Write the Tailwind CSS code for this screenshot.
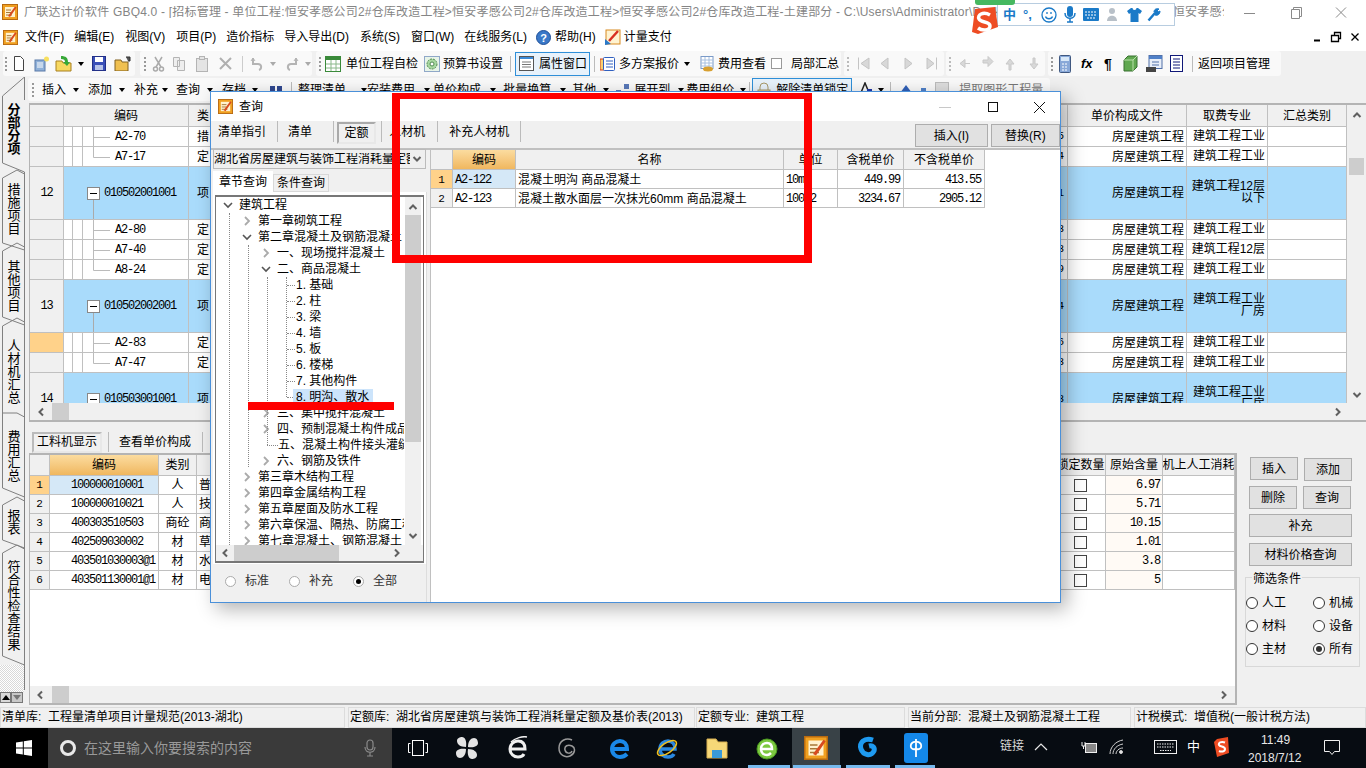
<!DOCTYPE html>
<html lang="zh-CN">
<head>
<meta charset="UTF-8">
<title>广联达计价软件 GBQ4.0</title>
<script src="https://cdn.jsdelivr.net/npm/@tailwindcss/browser@4"></script>
</head>
<body class="relative w-[1366px] h-[768px] overflow-hidden bg-[#f0f0f0] text-black text-[12px] leading-none font-['Liberation_Sans','Noto_Sans_CJK_SC',sans-serif]">

<svg class="hidden">
  <symbol id="app" viewBox="0 0 16 16"><rect x="0.5" y="0.5" width="15" height="15" fill="#f0a020" stroke="#b86a10"/><rect x="3" y="3" width="10" height="10" fill="#fff2cf"/><path d="M4 6h5M4 8.500h5M4 11h6" stroke="#a87838"/><path d="M6 12L13 2.500l1.500 1L8 13z" fill="#d84a20"/></symbol>
  <symbol id="up" viewBox="0 0 10 10"><path d="M1.500 7L5 3.500 8.500 7" fill="none" stroke="#606060" stroke-width="2"/></symbol>
  <symbol id="down" viewBox="0 0 10 10"><path d="M1.500 3L5 6.500 8.500 3" fill="none" stroke="#606060" stroke-width="2"/></symbol>
  <symbol id="left" viewBox="0 0 10 10"><path d="M7 1.500L3.500 5 7 8.500" fill="none" stroke="#606060" stroke-width="2"/></symbol>
  <symbol id="right" viewBox="0 0 10 10"><path d="M3 1.500L6.500 5 3 8.500" fill="none" stroke="#606060" stroke-width="2"/></symbol>
  <symbol id="treeopen" viewBox="0 0 10 10"><path d="M1 3L5 7 9 3" fill="none" stroke="#555" stroke-width="1.600"/></symbol>
  <symbol id="treeclosed" viewBox="0 0 10 10"><path d="M3 1L7 5 3 9" fill="none" stroke="#aaa" stroke-width="1.800"/></symbol>
  <symbol id="tplus" viewBox="0 0 27 20"><path d="M10.500 0V20M10.500 10.500H27" stroke="#bbb" fill="none"/></symbol>
  <symbol id="tlast" viewBox="0 0 27 20"><path d="M10.500 0V10.500H27" stroke="#bbb" fill="none"/></symbol>
</svg>

<!-- title bar -->
<div class="h-[23px] bg-white flex items-center relative">
  <svg class="w-[16px] h-[16px] ml-[2px]"><use href="#app"/></svg>
  <div class="ml-[6px] w-[1200px] whitespace-nowrap overflow-hidden text-[#858585] tracking-[0.2px]">广联达计价软件 GBQ4.0 - [招标管理 - 单位工程:恒安孝感公司2#仓库改造工程&gt;恒安孝感公司2#仓库改造工程&gt;恒安孝感公司2#仓库改造工程-土建部分 - C:\Users\Administrator\Desktop\恒安孝感公司2#仓库改造工\恒安孝感公...</div>
  <svg class="absolute left-[1244px] top-[6px]" width="110" height="14" fill="none" stroke="#8a8a8a"><path d="M0 7.500H11"/><path d="M47.500 3.500h8v9h-8zM49.500 3.500v-2h8v9h-2"/><path d="M92 1.500l10 10M102 1.500l-10 10"/></svg>
</div>

<!-- menu bar -->
<div class="h-[28px] bg-white flex items-center relative">
  <svg class="w-[15px] h-[15px] ml-[3px]"><use href="#app"/></svg>
  <span class="ml-[7px]">文件(F)</span>
  <span class="ml-[10px]">编辑(E)</span>
  <span class="ml-[11px]">视图(V)</span>
  <span class="ml-[11px]">项目(P)</span>
  <span class="ml-[10px]">造价指标</span>
  <span class="ml-[10px]">导入导出(D)</span>
  <span class="ml-[11px]">系统(S)</span>
  <span class="ml-[11px]">窗口(W)</span>
  <span class="ml-[10px]">在线服务(L)</span>
  <svg class="ml-[9px]" width="15" height="15"><circle cx="7.500" cy="7.500" r="7" fill="#3a78c8" stroke="#1e4f98"/><text x="7.500" y="11.500" text-anchor="middle" font-size="11" font-weight="700" fill="#fff">?</text></svg>
  <span class="ml-[4px]">帮助(H)</span>
  <svg class="ml-[8px]" width="17" height="17"><rect x="2" y="1" width="14" height="14" fill="#fff3d0" stroke="#d88a20"/><path d="M5 12L14 2" stroke="#d83020" stroke-width="2.500"/><path d="M1 10l6 5-6 1z" fill="#2a78c8"/></svg>
  <span class="ml-[3px]">计量支付</span>
  <svg class="absolute left-[1312px] top-[8px]" width="50" height="12" fill="none" stroke="#000"><path d="M2 9.500h6" stroke-width="2"/><path d="M19.500 4.500h7v6h-7zM22.500 4.500v-3h6v6h-2" stroke-width="1.300"/><path d="M39.500 2.500l7 7M46.500 2.500l-7 7" stroke-width="1.300"/></svg>
</div>

<!-- toolbar one -->
<div class="h-[25px] flex items-center pl-[3px]">
  <div class="h-[25px] w-[132px] rounded-[3px] bg-[#f9f9f9] flex items-center">
    <div class="w-[5px] h-[14px] ml-[2px] mr-[-2px] border-l-2 border-dotted border-[#999]"></div>
    <div class="w-[22px] flex justify-center"><svg width="12" height="15"><path d="M1.500.500h6l3 3v11h-9z" fill="#fff" stroke="#444"/></svg></div>
    <div class="w-[23px] flex justify-center"><svg width="17" height="16"><rect x="2" y="4" width="10" height="11" fill="#8fb0d8" stroke="#5a7aa8"/><path d="M4 7h6M4 9h6M4 11h6" stroke="#fff"/><circle cx="13.500" cy="3" r="2.500" fill="#f8e060"/></svg></div>
    <div class="w-[23px] flex justify-center"><svg width="18" height="17"><path d="M1 6h6l1 2h8v8H1z" fill="#f8d860" stroke="#a88020"/><path d="M6 1c5 0 7 2 7 6h2l-3 4-4-4h2c0-2-1-3-4-3z" fill="#38a838"/></svg></div>
    <div class="w-[12px] flex justify-center"><div class="border-x-[3px] border-t-[4px] border-x-transparent border-t-black"></div></div>
    <div class="w-[23px] flex justify-center"><svg width="14" height="15"><rect x=".5" y=".5" width="13" height="14" fill="#3a50b8" stroke="#223088"/><rect x="3" y="1" width="8" height="5" fill="#fff"/><rect x="3" y="9" width="8" height="5" fill="#b8c4e8"/></svg></div>
    <div class="w-[25px] flex justify-center"><svg width="17" height="15"><path d="M1 4h6l1 2h6v9H1z" fill="#f0c050" stroke="#806020"/><path d="M12 1h4v4h-2" fill="#555" stroke="#333"/></svg></div>
  </div>
  <div class="ml-[5px] h-[25px] w-[172px] rounded-[3px] bg-[#f9f9f9] flex items-center text-[#b8b8b8]">
    <div class="w-[5px] h-[14px] ml-[4px] border-l-2 border-dotted border-[#999]"></div>
    <div class="w-[18px] flex justify-center"><svg width="13" height="16" fill="none" stroke="#aaa" stroke-width="1.500"><path d="M3 1l6 10M10 1L4 11"/><circle cx="3.500" cy="13" r="2"/><circle cx="9.500" cy="13" r="2"/></svg></div>
    <div class="w-[23px] flex justify-center"><svg width="14" height="15" fill="#eee" stroke="#b4b4b4"><path d="M1.500 1.500h6v9h-6zM5.500 4.500h7v10h-7z"/></svg></div>
    <div class="w-[23px] flex justify-center"><svg width="14" height="16" fill="#e4e4e4" stroke="#b4b4b4"><rect x="1.500" y="2.500" width="11" height="13"/><rect x="4.500" y=".5" width="5" height="3"/></svg></div>
    <div class="w-[24px] flex justify-center"><svg width="15" height="15" stroke="#b0b0b0" stroke-width="2"><path d="M2 2l11 11M13 2L2 13"/></svg></div>
    <div class="w-[1px] h-[16px] ml-[5px] bg-[#ccc]"></div>
    <div class="w-[22px] ml-[3px] flex justify-center"><svg width="14" height="15" fill="none" stroke="#b4b4b4" stroke-width="2"><path d="M3 2v6h5c4 0 4 5 1 6"/><path d="M1 5l2-3 2 3" stroke-width="1"/></svg></div>
    <div class="w-[10px] flex justify-center"><div class="border-x-[3px] border-t-[4px] border-x-transparent border-t-[#aaa]"></div></div>
    <div class="w-[28px] flex justify-center"><svg width="14" height="15" fill="none" stroke="#b4b4b4" stroke-width="2"><path d="M11 2v6H6c-4 0-4 5-1 6"/><path d="M9 5l2-3 2 3" stroke-width="1"/></svg></div>
    <div class="w-[4px] flex justify-center"><div class="shrink-0 border-x-[3px] border-t-[4px] border-x-transparent border-t-[#aaa]"></div></div>
  </div>
  <div class="ml-[4px] h-[25px] w-[525px] rounded-[3px] bg-[#f9f9f9] flex items-center whitespace-nowrap">
    <div class="w-[5px] h-[14px] ml-[3px] border-l-2 border-dotted border-[#999]"></div>
    <svg class="ml-[1px]" width="16" height="16"><rect x=".5" y=".5" width="15" height="15" fill="#fff" stroke="#3a8a3a"/><rect x="1" y="1" width="14" height="3" fill="#3a8a3a"/><path d="M1 8h14M1 12h14M6 4v11M11 4v11" stroke="#8ab88a"/></svg>
    <span class="ml-[5px]">单位工程自检</span>
    <svg class="ml-[6px]" width="16" height="16"><rect x=".5" y=".5" width="15" height="15" fill="#e8f4e8" stroke="#90a8c8"/><circle cx="8" cy="8" r="5" fill="#a8d8a0" stroke="#508850" stroke-dasharray="2 1"/><circle cx="8" cy="8" r="2" fill="#fff" stroke="#508850"/></svg>
    <span class="ml-[3px]">预算书设置</span>
    <div class="w-[1px] h-[16px] ml-[7px] bg-[#bbb]"></div>
    <div class="ml-[4px] w-[75px] h-[24px] border border-[#2f8fd8] bg-[#e8f2fb] flex items-center">
      <svg class="ml-[3px]" width="15" height="15"><rect x=".5" y=".5" width="14" height="14" fill="#fff" stroke="#555"/><rect x="1" y="1" width="13" height="2" fill="#3a8ad8"/><path d="M3 6h9M3 8.500h9M3 11h9" stroke="#777"/></svg>
      <span class="ml-[5px]">属性窗口</span>
    </div>
    <div class="w-[1px] h-[16px] ml-[4px] bg-[#bbb]"></div>
    <svg class="ml-[5px]" width="16" height="16"><rect x="0" y="3" width="8" height="11" fill="#f8d070" stroke="#d04020"/><rect x="3.500" y="1.500" width="11" height="13" rx="1" fill="#fff" stroke="#3060c0"/><path d="M6 5h7M6 8h7M6 11h7" stroke="#3060c0"/></svg>
    <span class="ml-[3px]">多方案报价</span>
    <div class="ml-[5px] border-x-[3px] border-t-[4px] border-x-transparent border-t-black"></div>
    <svg class="ml-[10px]" width="14" height="16"><rect x="1" y=".5" width="12" height="12" fill="#fff" stroke="#7a9ac8"/><path d="M1 4h12M1 7h12M1 10h12M5 1v11M9 1v11" stroke="#a8c0e0"/><ellipse cx="8" cy="13" rx="5" ry="2.500" fill="#d8a030"/></svg>
    <span class="ml-[4px]">费用查看</span>
    <div class="ml-[5px] w-[11px] h-[11px] border border-[#999] bg-white"></div>
    <span class="ml-[9px]">局部汇总</span>
  </div>
  <div class="ml-[3px] h-[25px] w-[100px] rounded-[3px] bg-[#f9f9f9] flex items-center">
    <div class="w-[5px] h-[14px] ml-[3px] border-l-2 border-dotted border-[#bbb]"></div>
    <svg class="ml-[3px]" width="90" height="15" fill="#d8d8d8" stroke="#c4c4c4"><path d="M3.500 1.500v12M14 2l-8 5.500 8 5.500zM33 2l-7 5.500 7 5.500zM50 2l7 5.500-7 5.500zM72 2l7 5.500-7 5.500zM81.500 1.500v12"/></svg>
  </div>
  <div class="ml-[2px] h-[25px] w-[99px] rounded-[3px] bg-[#f9f9f9] flex items-center">
    <div class="w-[5px] h-[14px] ml-[3px] border-l-2 border-dotted border-[#bbb]"></div>
    <svg class="ml-[5px]" width="82" height="15" fill="#d8d8d8" stroke="#c8c8c8"><path d="M11 7.500h-5v-4l-5 4 5 4v-4M24 4h5V.5l5 5-5 5v-3.500h-5zM50 14V8h-3l4-5 4 5h-3v6zM74 2v6h-3l4 5 4-5h-3V2z"/></svg>
  </div>
  <div class="ml-[3px] h-[25px] w-[233px] rounded-[3px] bg-[#f9f9f9] flex items-center whitespace-nowrap">
    <div class="w-[5px] h-[14px] ml-[3px] border-l-2 border-dotted border-[#999]"></div>
    <svg class="ml-[3px]" width="12" height="18"><rect x=".5" y=".5" width="11" height="17" rx="1" fill="#88a8d8" stroke="#405880"/><rect x="2" y="2" width="8" height="4" fill="#d8e8f8"/><path d="M3 9h6M3 12h6M3 15h6" stroke="#fff" stroke-dasharray="2 1"/></svg>
    <span class="ml-[10px] italic font-bold text-[13px] w-[12px]">fx</span>
    <span class="ml-[11px] font-bold text-[14px] w-[9px]">¶</span>
    <svg class="ml-[10px]" width="15" height="17"><path d="M1 5l4-4h9v11l-4 4H1z" fill="#60a850" stroke="#387030"/><path d="M1 5h9v11M10 5l4-4" fill="none" stroke="#b8e0a8"/></svg>
    <svg class="ml-[8px]" width="17" height="18"><rect x="3" y=".5" width="13" height="13" fill="#e8eef8" stroke="#5070a8"/><rect x="3" y="1" width="13" height="3" fill="#5080c8"/><path d="M6 7h7M6 10h7" stroke="#5070a8"/><rect x="0" y="12" width="10" height="5" fill="#444"/></svg>
    <svg class="ml-[7px]" width="13" height="17"><rect x=".5" y=".5" width="12" height="16" fill="#fff" stroke="#101878"/><path d="M3 4h7M3 7h7M3 10h7M3 13h7" stroke="#101878"/></svg>
    <div class="w-[1px] h-[16px] ml-[9px] bg-[#bbb]"></div>
    <span class="ml-[5px]">返回项目管理</span>
  </div>
</div>

<!-- toolbar two: the dialog sits over its lower half -->
<div class="h-[23px] mt-[2px] ml-[28px] w-[1022px] rounded-[3px] bg-[#f9f9f9] flex items-center whitespace-nowrap">
  <div class="w-[5px] h-[14px] ml-[4px] border-l-2 border-dotted border-[#999]"></div>
  <span class="ml-[5px]">插入</span><div class="ml-[7px] border-x-[3px] border-t-[4px] border-x-transparent border-t-black"></div>
  <span class="ml-[9px]">添加</span><div class="ml-[7px] border-x-[3px] border-t-[4px] border-x-transparent border-t-black"></div>
  <span class="ml-[9px]">补充</span><div class="ml-[4px] border-x-[3px] border-t-[4px] border-x-transparent border-t-black"></div>
  <span class="ml-[8px]">查询</span><div class="ml-[7px] border-x-[3px] border-t-[4px] border-x-transparent border-t-black"></div>
  <span class="ml-[9px]">存档</span><div class="ml-[6px] border-x-[3px] border-t-[4px] border-x-transparent border-t-black"></div>
  <svg class="ml-[11px]" width="14" height="14" fill="#304890"><rect x="1" y="3" width="5" height="10"/><rect x="8" y="3" width="5" height="10"/></svg>
  <div class="w-[1px] h-[16px] ml-[8px] bg-[#bbb]"></div>
  <span class="ml-[6px]">整理清单</span><div class="ml-[15px] border-x-[3px] border-t-[4px] border-x-transparent border-t-black"></div>
  <span class="ml-[0px]">安装费用</span><div class="ml-[9px] border-x-[3px] border-t-[4px] border-x-transparent border-t-black"></div>
  <span class="ml-[3px]">单价构成</span><div class="ml-[9px] border-x-[3px] border-t-[4px] border-x-transparent border-t-black"></div>
  <span class="ml-[7px]">批量换算</span><div class="ml-[9px] border-x-[3px] border-t-[4px] border-x-transparent border-t-black"></div>
  <span class="ml-[6px]">其他</span><div class="ml-[7px] border-x-[3px] border-t-[4px] border-x-transparent border-t-black"></div>
  <svg class="ml-[6px]" width="16" height="14" fill="#5878b8"><rect x="1" y="7" width="5" height="5"/><rect x="9" y="1" width="5" height="5"/></svg>
  <span class="ml-[3px]">展开到</span><div class="ml-[8px] border-x-[3px] border-t-[4px] border-x-transparent border-t-black"></div>
  <span class="ml-[2px]">费用组价</span><div class="ml-[6px] border-x-[3px] border-t-[4px] border-x-transparent border-t-black"></div>
  <div class="w-[1px] h-[16px] ml-[3px] bg-[#bbb]"></div>
  <div class="ml-[2px] w-[100px] h-[23px] border border-[#2f8fd8] bg-[#e8f2fb] flex items-center">
    <svg class="ml-[3px]" width="16" height="15" fill="none" stroke="#a89868"><path d="M4 8V5a4 4 0 0 1 8 0v3"/><rect x="2" y="8" width="12" height="6" fill="#e8d8a8"/></svg>
    <span class="ml-[4px]">解除清单锁定</span>
  </div>
  <svg class="ml-[6px]" width="16" height="15"><path d="M2 13L7 1l5 12" fill="none" stroke="#222" stroke-width="1.500"/><rect x="9" y="7" width="5" height="7" fill="#2038a8"/></svg>
  <div class="ml-[4px] border-x-[3px] border-t-[4px] border-x-transparent border-t-black"></div>
  <div class="w-[1px] h-[16px] ml-[6px] bg-[#bbb]"></div>
  <svg class="ml-[7px]" width="16" height="14" fill="#3060b8"><path d="M8 2l6 8H2z"/></svg>
  <svg class="ml-[6px]" width="8" height="14" fill="#5080c8"><rect x="1" y="5" width="5" height="8"/></svg>
  <svg class="ml-[7px]" width="14" height="15"><rect x=".5" y=".5" width="13" height="14" fill="#ddd" stroke="#bbb"/></svg>
  <span class="ml-[10px] text-[#777]">提取图形工程量</span>
</div>

<!-- main area -->
<div class="flex h-[604px] mt-[2px]">

  <!-- side tabs -->
  <div class="w-[29px] shrink-0 relative">
    <svg class="absolute left-0 top-[-26px]" width="29" height="630" viewBox="0 77 29 630" fill="none" stroke="#808080">
      <path d="M24.500 77v23M24.500 77L2.500 96V163L24.500 172"/>
      <path d="M24.500 172V690"/>
      <path d="M2.500 178L17 170l7.500 4M2.500 178V243L24.500 250"/>
      <path d="M2.500 251L17 243l7.500 4M2.500 251V317L24.500 325"/>
      <path d="M2.500 326L17 318l7.500 4M2.500 326V413"/>
      <path d="M2.500 413L17 413l7.500 4M2.500 413V488L24.500 497"/>
      <path d="M2.500 505L17 497l7.500 4M2.500 505V540L24.500 548"/>
      <path d="M2.500 553L17 545l7.500 4M2.500 553V656L24.500 665"/>
    </svg>
    <div class="absolute left-0 top-[562px] w-[24px] h-[27px] bg-[repeating-conic-gradient(#d8d8d8_0_25%,#ffffff_0_50%)] bg-[length:2px_2px]"></div>
    <div class="absolute left-0 top-[589px] w-[23px] h-[11px] flex">
      <div class="w-[11px] h-[11px] bg-[#d8d8d8] border border-[#777] flex items-center justify-center"><div class="border-x-[4px] border-b-[5px] border-x-transparent border-b-black"></div></div>
      <div class="w-[12px] h-[11px] bg-[#c8c8c8] border border-[#777] flex items-center justify-center"><div class="border-x-[4px] border-t-[5px] border-x-transparent border-t-[#777]"></div></div>
    </div>
    <div class="relative flex flex-col w-[28px] text-center text-[13px] leading-[13px]">
      <div class="font-bold">分<br>部<br>分<br>项</div>
      <div class="mt-[28px]">措<br>施<br>项<br>目</div>
      <div class="mt-[25px]">其<br>他<br>项<br>目</div>
      <div class="mt-[27px]">人<br>材<br>机<br>汇<br>总</div>
      <div class="mt-[26px]">费<br>用<br>汇<br>总</div>
      <div class="mt-[27px]">报<br>表</div>
      <div class="mt-[25px]">符<br>合<br>性<br>检<br>查<br>结<br>果</div>
    </div>
  </div>

  <div class="flex-1 min-w-0 flex flex-col">
    <!-- sub-item grid -->
    <div class="h-[319px] shrink-0 border-t-2 border-b-2 border-l border-[#b4b4b4] bg-white flex flex-col overflow-hidden">
      <div class="flex-1 min-h-0 flex">
        <div class="w-[1318px] overflow-hidden [&>div]:grid [&>div]:grid-cols-[34px_125px_851px_28px_119px_81px_79px] [&>div>div]:border-r [&>div>div]:border-b [&>div>div]:border-[#c0c0c0] [&>div>div]:overflow-hidden">
          <div class="h-[22px] bg-[#f0f0f0] [&>div]:flex [&>div]:items-center [&>div]:justify-center">
            <div></div><div>编码</div><div class="!justify-start pl-[8px]">类</div><div></div><div>单价构成文件</div><div>取费专业</div><div>汇总类别</div>
          </div>
          <!-- rows -->
          <div class="h-[20px]">
            <div class="bg-[#f0f0f0]"></div>
            <div class="flex items-center"><div class="w-[9px] h-full border-r border-[#c0c0c0]"></div><div class="w-[10px] h-full border-r border-[#c0c0c0]"></div><svg width="27" height="20"><use href="#tplus"/></svg><span class="ml-[5px] font-['Liberation_Mono'] text-[12px] tracking-[-1.2px]">A2-70</span></div>
            <div class="flex items-center pl-[8px]">措</div>
            <div class="flex items-center justify-end pr-[3px] font-['Liberation_Mono'] text-[11px]">5</div>
            <div class="flex items-center justify-end pr-[2px]">房屋建筑工程</div>
            <div class="flex items-center justify-end pr-[2px] pb-[2px]">建筑工程工业</div>
            <div></div>
          </div>
          <div class="h-[20px]">
            <div class="bg-[#f0f0f0]"></div>
            <div class="flex items-center"><div class="w-[9px] h-full border-r border-[#c0c0c0]"></div><div class="w-[10px] h-full border-r border-[#c0c0c0]"></div><svg width="27" height="20"><use href="#tlast"/></svg><span class="ml-[5px] font-['Liberation_Mono'] text-[12px] tracking-[-1.2px]">A7-17</span></div>
            <div class="flex items-center pl-[8px]">定</div>
            <div class="flex items-center justify-end pr-[3px] font-['Liberation_Mono'] text-[11px]">4</div>
            <div class="flex items-center justify-end pr-[2px]">房屋建筑工程</div>
            <div class="flex items-center justify-end pr-[2px] pb-[2px]">建筑工程工业</div>
            <div></div>
          </div>
          <div class="h-[53px] bg-[#a9dbfb]">
            <div class="!bg-[#f0f0f0] flex items-center justify-center font-['Liberation_Mono'] text-[12px] tracking-[-1.2px]">12</div>
            <div class="relative flex items-center pl-[23px]"><div class="w-[13px] h-[13px] bg-white border border-[#888] flex items-center justify-center"><div class="w-[7px] h-[1px] bg-black"></div></div><span class="ml-[4px] font-['Liberation_Mono'] text-[12px] tracking-[-1.2px]">010502001001</span><div class="absolute left-[29px] top-[33px] bottom-0 w-[1px] bg-[#aaa]"></div></div>
            <div class="flex items-center pl-[8px]">项</div>
            <div class="flex items-center justify-end pr-[3px] font-['Liberation_Mono'] text-[11px]">1</div>
            <div class="flex items-center justify-end pr-[2px]">房屋建筑工程</div>
            <div class="flex flex-col justify-center items-end pr-[2px] pb-[2px] leading-[12px]"><span>建筑工程12层</span><span>以下</span></div>
            <div></div>
          </div>
          <div class="h-[20px]">
            <div class="bg-[#f0f0f0]"></div>
            <div class="flex items-center"><div class="w-[9px] h-full border-r border-[#c0c0c0]"></div><div class="w-[10px] h-full border-r border-[#c0c0c0]"></div><svg width="27" height="20"><use href="#tplus"/></svg><span class="ml-[5px] font-['Liberation_Mono'] text-[12px] tracking-[-1.2px]">A2-80</span></div>
            <div class="flex items-center pl-[8px]">定</div>
            <div class="flex items-center justify-end pr-[3px] font-['Liberation_Mono'] text-[11px]">3</div>
            <div class="flex items-center justify-end pr-[2px]">房屋建筑工程</div>
            <div class="flex items-center justify-end pr-[2px] pb-[2px]">建筑工程工业</div>
            <div></div>
          </div>
          <div class="h-[20px]">
            <div class="bg-[#f0f0f0]"></div>
            <div class="flex items-center"><div class="w-[9px] h-full border-r border-[#c0c0c0]"></div><div class="w-[10px] h-full border-r border-[#c0c0c0]"></div><svg width="27" height="20"><use href="#tplus"/></svg><span class="ml-[5px] font-['Liberation_Mono'] text-[12px] tracking-[-1.2px]">A7-40</span></div>
            <div class="flex items-center pl-[8px]">定</div>
            <div class="flex items-center justify-end pr-[3px] font-['Liberation_Mono'] text-[11px]">3</div>
            <div class="flex items-center justify-end pr-[2px]">房屋建筑工程</div>
            <div class="flex items-center justify-end pr-[2px] pb-[2px]">建筑工程12层</div>
            <div></div>
          </div>
          <div class="h-[20px]">
            <div class="bg-[#f0f0f0]"></div>
            <div class="flex items-center"><div class="w-[9px] h-full border-r border-[#c0c0c0]"></div><div class="w-[10px] h-full border-r border-[#c0c0c0]"></div><svg width="27" height="20"><use href="#tlast"/></svg><span class="ml-[5px] font-['Liberation_Mono'] text-[12px] tracking-[-1.2px]">A8-24</span></div>
            <div class="flex items-center pl-[8px]">定</div>
            <div class="flex items-center justify-end pr-[3px] font-['Liberation_Mono'] text-[11px]">9</div>
            <div class="flex items-center justify-end pr-[2px]">房屋建筑工程</div>
            <div class="flex items-center justify-end pr-[2px] pb-[2px]">建筑工程工业</div>
            <div></div>
          </div>
          <div class="h-[53px] bg-[#a9dbfb]">
            <div class="!bg-[#f0f0f0] flex items-center justify-center font-['Liberation_Mono'] text-[12px] tracking-[-1.2px]">13</div>
            <div class="relative flex items-center pl-[23px]"><div class="w-[13px] h-[13px] bg-white border border-[#888] flex items-center justify-center"><div class="w-[7px] h-[1px] bg-black"></div></div><span class="ml-[4px] font-['Liberation_Mono'] text-[12px] tracking-[-1.2px]">010502002001</span><div class="absolute left-[29px] top-[33px] bottom-0 w-[1px] bg-[#aaa]"></div></div>
            <div class="flex items-center pl-[8px]">项</div>
            <div class="flex items-center justify-end pr-[3px] font-['Liberation_Mono'] text-[11px]">4</div>
            <div class="flex items-center justify-end pr-[2px]">房屋建筑工程</div>
            <div class="flex flex-col justify-center items-end pr-[2px] pb-[2px] leading-[12px]"><span>建筑工程工业</span><span>厂房</span></div>
            <div></div>
          </div>
          <div class="h-[20px]">
            <div class="bg-[#ffd28a]"></div>
            <div class="flex items-center"><div class="w-[9px] h-full border-r border-[#c0c0c0]"></div><div class="w-[10px] h-full border-r border-[#c0c0c0]"></div><svg width="27" height="20"><use href="#tplus"/></svg><span class="ml-[5px] font-['Liberation_Mono'] text-[12px] tracking-[-1.2px]">A2-83</span></div>
            <div class="flex items-center pl-[8px]">定</div>
            <div class="flex items-center justify-end pr-[3px] font-['Liberation_Mono'] text-[11px]">6</div>
            <div class="flex items-center justify-end pr-[2px]">房屋建筑工程</div>
            <div class="flex items-center justify-end pr-[2px] pb-[2px]">建筑工程工业</div>
            <div></div>
          </div>
          <div class="h-[20px]">
            <div class="bg-[#f0f0f0]"></div>
            <div class="flex items-center"><div class="w-[9px] h-full border-r border-[#c0c0c0]"></div><div class="w-[10px] h-full border-r border-[#c0c0c0]"></div><svg width="27" height="20"><use href="#tlast"/></svg><span class="ml-[5px] font-['Liberation_Mono'] text-[12px] tracking-[-1.2px]">A7-47</span></div>
            <div class="flex items-center pl-[8px]">定</div>
            <div class="flex items-center justify-end pr-[3px] font-['Liberation_Mono'] text-[11px]">3</div>
            <div class="flex items-center justify-end pr-[2px]">房屋建筑工程</div>
            <div class="flex items-center justify-end pr-[2px] pb-[2px]">建筑工程工业</div>
            <div></div>
          </div>
          <div class="h-[53px] bg-[#a9dbfb]">
            <div class="!bg-[#f0f0f0] flex items-center justify-center font-['Liberation_Mono'] text-[12px] tracking-[-1.2px]">14</div>
            <div class="relative flex items-center pl-[23px]"><div class="w-[13px] h-[13px] bg-white border border-[#888] flex items-center justify-center"><div class="w-[7px] h-[1px] bg-black"></div></div><span class="ml-[4px] font-['Liberation_Mono'] text-[12px] tracking-[-1.2px]">010503001001</span></div>
            <div class="flex items-center pl-[8px]">项</div>
            <div class="flex items-center justify-end pr-[3px] font-['Liberation_Mono'] text-[11px]">3</div>
            <div class="flex items-center justify-end pr-[2px]">房屋建筑工程</div>
            <div class="flex flex-col justify-center items-end pr-[2px] pb-[2px] leading-[12px]"><span>建筑工程工业</span><span>厂房</span></div>
            <div></div>
          </div>
        </div>
        <!-- vertical scrollbar -->
        <div class="w-[19px] bg-[#f0f0f0] flex flex-col items-center">
          <svg class="mt-[5px]" width="10" height="10"><use href="#up"/></svg>
          <div class="mt-[38px] w-[15px] h-[17px] bg-[#cdcdcd]"></div>
          <div class="flex-1"></div>
          <svg class="mb-[3px]" width="10" height="10"><use href="#down"/></svg>
        </div>
      </div>
      <!-- horizontal scrollbar -->
      <div class="h-[17px] shrink-0 bg-[#f0f0f0] flex items-center">
        <svg class="ml-[6px]" width="10" height="10"><use href="#left"/></svg>
        <div class="ml-[6px] w-[17px] h-[17px] bg-[#cdcdcd]"></div>
        <div class="flex-1"></div>
        <svg class="mr-[23px]" width="10" height="10"><use href="#right"/></svg>
      </div>
    </div>

    <!-- lower panel -->
    <div class="flex-1 min-h-0 flex">
      <div class="w-[1208px] flex flex-col">
        <div class="h-[31px] shrink-0 flex items-center pl-[3px] pt-[9px]">
          <div class="w-[70px] h-[21px] border-2 border-[#bbb] border-r-[#e8e8e8] border-b-[#e8e8e8] flex items-center justify-center">工料机显示</div>
          <div class="ml-[6px] w-[1px] h-[20px] bg-[#bbb]"></div>
          <span class="ml-[10px]">查看单价构成</span>
          <div class="ml-[11px] w-[1px] h-[20px] bg-[#bbb]"></div>
        </div>
        <div class="h-[252px] shrink-0 border-t-2 border-b-2 border-l border-r-2 border-[#b4b4b4] bg-white flex flex-col overflow-hidden">
          <div class="flex-1 min-h-0 [&>div]:grid [&>div]:grid-cols-[20px_109px_38px_859px_50px_57px_72px] [&>div]:h-[19px] [&>div>div]:border-r [&>div>div]:border-b [&>div>div]:border-[#c0c0c0] [&>div>div]:flex [&>div>div]:items-center [&>div>div]:overflow-hidden [&>div>div]:whitespace-nowrap">
            <div class="!h-[21px] bg-[#f0f0f0] [&>div]:justify-center">
              <div></div><div class="bg-gradient-to-b from-[#fbdc9f] to-[#f0b75e]">编码</div><div>类别</div><div></div><div>锁定数量</div><div>原始含量</div><div>机上人工消耗</div>
            </div>
            <div>
              <div class="bg-[#ffd28a] justify-center font-['Liberation_Mono'] text-[11px]">1</div>
              <div class="bg-[#d5e8f7] pl-[21px] font-['Liberation_Mono'] text-[12px] tracking-[-1.2px]">100000010001</div>
              <div class="justify-center">人</div><div class="pl-[2px]">普工</div>
              <div class="justify-center"><div class="w-[13px] h-[13px] border border-[#444]"></div></div>
              <div class="bg-[#fffaf5] justify-end pr-[2px] font-['Liberation_Mono'] text-[12px] tracking-[-1.2px]">6.97</div><div></div>
            </div>
            <div>
              <div class="bg-[#f0f0f0] justify-center font-['Liberation_Mono'] text-[11px]">2</div>
              <div class="pl-[21px] font-['Liberation_Mono'] text-[12px] tracking-[-1.2px]">100000010021</div>
              <div class="justify-center">人</div><div class="pl-[2px]">技工</div>
              <div class="justify-center"><div class="w-[13px] h-[13px] border border-[#444]"></div></div>
              <div class="bg-[#fffaf5] justify-end pr-[2px] font-['Liberation_Mono'] text-[12px] tracking-[-1.2px]">5.71</div><div></div>
            </div>
            <div>
              <div class="bg-[#f0f0f0] justify-center font-['Liberation_Mono'] text-[11px]">3</div>
              <div class="pl-[21px] font-['Liberation_Mono'] text-[12px] tracking-[-1.2px]">400303510503</div>
              <div class="justify-center">商砼</div><div class="pl-[2px]">商品混凝土</div>
              <div class="justify-center"><div class="w-[13px] h-[13px] border border-[#444]"></div></div>
              <div class="bg-[#fffaf5] justify-end pr-[2px] font-['Liberation_Mono'] text-[12px] tracking-[-1.2px]">10.15</div><div></div>
            </div>
            <div>
              <div class="bg-[#f0f0f0] justify-center font-['Liberation_Mono'] text-[11px]">4</div>
              <div class="pl-[21px] font-['Liberation_Mono'] text-[12px] tracking-[-1.2px]">402509030002</div>
              <div class="justify-center">材</div><div class="pl-[2px]">草袋</div>
              <div class="justify-center"><div class="w-[13px] h-[13px] border border-[#444]"></div></div>
              <div class="bg-[#fffaf5] justify-end pr-[2px] font-['Liberation_Mono'] text-[12px] tracking-[-1.2px]">1.01</div><div></div>
            </div>
            <div>
              <div class="bg-[#f0f0f0] justify-center font-['Liberation_Mono'] text-[11px]">5</div>
              <div class="pl-[21px] font-['Liberation_Mono'] text-[12px] tracking-[-1.2px]">403501030003@1</div>
              <div class="justify-center">材</div><div class="pl-[2px]">水</div>
              <div class="justify-center"><div class="w-[13px] h-[13px] border border-[#444]"></div></div>
              <div class="bg-[#fffaf5] justify-end pr-[2px] font-['Liberation_Mono'] text-[12px] tracking-[-1.2px]">3.8</div><div></div>
            </div>
            <div>
              <div class="bg-[#f0f0f0] justify-center font-['Liberation_Mono'] text-[11px]">6</div>
              <div class="pl-[21px] font-['Liberation_Mono'] text-[12px] tracking-[-1.2px]">403501130001@1</div>
              <div class="justify-center">材</div><div class="pl-[2px]">电</div>
              <div class="justify-center"><div class="w-[13px] h-[13px] border border-[#444]"></div></div>
              <div class="bg-[#fffaf5] justify-end pr-[2px] font-['Liberation_Mono'] text-[12px] tracking-[-1.2px]">5</div><div></div>
            </div>
          </div>
          <div class="h-[17px] shrink-0 bg-[#f0f0f0] flex items-center">
            <svg class="ml-[5px]" width="10" height="10"><use href="#left"/></svg>
            <div class="ml-[7px] w-[17px] h-[17px] bg-[#cdcdcd]"></div>
            <div class="flex-1"></div>
            <svg class="mr-[6px]" width="10" height="10"><use href="#right"/></svg>
          </div>
        </div>
      </div>

      <!-- material buttons and filter -->
      <div class="flex-1 flex flex-col pt-[35px] pl-[12px]">
        <div class="flex gap-[6px]">
          <button class="w-[48px] h-[23px] ml-[1px] bg-[#e1e1e1] border border-[#adadad]">插入</button>
          <button class="w-[48px] h-[23px] mt-[1px] bg-[#e1e1e1] border border-[#adadad]">添加</button>
        </div>
        <div class="flex gap-[6px] mt-[5px]">
          <button class="w-[48px] h-[23px] bg-[#e1e1e1] border border-[#adadad]">删除</button>
          <button class="w-[48px] h-[23px] bg-[#e1e1e1] border border-[#adadad]">查询</button>
        </div>
        <button class="mt-[5px] w-[103px] h-[23px] bg-[#e1e1e1] border border-[#adadad]">补充</button>
        <button class="mt-[6px] w-[103px] h-[23px] bg-[#e1e1e1] border border-[#adadad]">材料价格查询</button>
        <div class="relative ml-[-4px] mt-[11px] w-[115px] h-[90px] border border-[#d8d8d8] pt-[19px]">
          <span class="absolute left-[6px] top-[-5px] px-[1px] bg-[#f0f0f0]">筛选条件</span>
          <div class="grid grid-cols-[67px_48px] gap-y-[11px]">
            <div class="flex items-center h-[12px]"><div class="w-[12px] h-[12px] rounded-full border border-[#333] bg-white"></div><span class="ml-[4px]">人工</span></div>
            <div class="flex items-center h-[12px]"><div class="w-[12px] h-[12px] rounded-full border border-[#333] bg-white"></div><span class="ml-[4px]">机械</span></div>
            <div class="flex items-center h-[12px]"><div class="w-[12px] h-[12px] rounded-full border border-[#333] bg-white"></div><span class="ml-[4px]">材料</span></div>
            <div class="flex items-center h-[12px]"><div class="w-[12px] h-[12px] rounded-full border border-[#333] bg-white"></div><span class="ml-[4px]">设备</span></div>
            <div class="flex items-center h-[12px]"><div class="w-[12px] h-[12px] rounded-full border border-[#333] bg-white"></div><span class="ml-[4px]">主材</span></div>
            <div class="flex items-center h-[12px]"><div class="w-[12px] h-[12px] rounded-full border border-[#333] bg-white flex items-center justify-center"><div class="w-[6px] h-[6px] rounded-full bg-[#333]"></div></div><span class="ml-[4px]">所有</span></div>
          </div>
        </div>
      </div>
    </div>
  </div>
</div>

<!-- status bar -->
<div class="h-[21px] flex whitespace-nowrap gap-[3px] [&>div]:flex [&>div]:items-center [&>div]:pl-[1px] [&>div]:pb-[1px] [&>div]:border [&>div]:border-[#dcdcdc] [&>div]:overflow-hidden">
  <div class="w-[345px]">清单库:&nbsp; 工程量清单项目计量规范(2013-湖北)</div>
  <div class="w-[347px]">定额库:&nbsp; 湖北省房屋建筑与装饰工程消耗量定额及基价表(2013)</div>
  <div class="w-[209px] ml-[-2px]">定额专业:&nbsp; 建筑工程</div>
  <div class="w-[223px]">当前分部:&nbsp; 混凝土及钢筋混凝土工程</div>
  <div class="flex-1">计税模式:&nbsp; 增值税(一般计税方法)</div>
</div>

<!-- taskbar -->
<div class="h-[40px] bg-[#070c12] flex items-center text-white relative">
  <div class="w-[48px] h-full bg-black flex items-center justify-center">
    <svg width="16" height="16" fill="#fff"><path d="M0 2.500l6.800-1v6H0zM7.800 1.300L16 0v7.500H7.800zM0 8.500h6.800v6l-6.800-1zM7.800 8.500H16V16l-8.200-1.300z"/></svg>
  </div>
  <div class="w-[344px] h-full bg-[#3a3a3a] flex items-center">
    <div class="ml-[12px] w-[16px] h-[16px] rounded-full border-[3px] border-[#e8e8e8]"></div>
    <span class="ml-[8px] text-[#999] text-[14px]">在这里输入你要搜索的内容</span>
    <svg class="ml-[112px]" width="12" height="18" fill="none" stroke="#8a8a8a" stroke-width="1.200"><rect x="3" y="1" width="6" height="10" rx="3"/><path d="M1 8c0 7 10 7 10 0M6 13v4M3 17h6"/></svg>
  </div>
  <svg class="ml-[16px]" width="20" height="16" fill="none" stroke="#fff"><rect x="4.500" y=".5" width="11" height="15"/><path d="M2.500 3.500h-2v9h2M17.500 3.500h2v9h-2"/></svg>
  <svg class="ml-[27px]" width="24" height="24" fill="#e4e4e4"><path d="M11 11C5 11 2 8 2 5c0-3 3-4 5-4 3 0 5 4 4 10zM13 11c0-6 3-9 6-9 3 0 4 3 4 5 0 3-4 5-10 4zM13 13c6 0 9 3 9 6 0 3-3 4-5 4-3 0-5-4-4-10zM11 13c0 6-3 9-6 9-3 0-4-3-4-5 0-3 4-5 10-4z"/></svg>
  <svg class="ml-[28px]" width="22" height="24" fill="none" stroke="#f0f0f0" stroke-width="3"><path d="M3 13h15c0-6-3-8-7-8s-8 3-8 8 4 8 8 8c3 0 5-1 6-3"/><path d="M4 6C8 2 16 0 20 1" stroke-width="1.500"/></svg>
  <svg class="ml-[28px]" width="20" height="22" fill="none" stroke="#9a9a9a" stroke-width="1.500"><path d="M15 3C9 0 2 4 2 11s6 10 11 8 6-8 2-10-8 0-7 4 6 4 7 1"/></svg>
  <svg class="ml-[32px]" width="22" height="24" fill="none" stroke="#1a88e8" stroke-width="4"><path d="M3 13h15c0-5-3-8-7-8s-8 3-8 8 4 8 8 8c3 0 5-1 7-3"/></svg>
  <svg class="ml-[24px]" width="24" height="24" fill="none"><path d="M5 13h15c0-5-3-8-7-8s-8 3-8 8 4 8 8 8c3 0 5-1 6-3" stroke="#2a88e0" stroke-width="3.500"/><ellipse cx="12" cy="12" rx="11" ry="5" stroke="#f0c020" stroke-width="1.500" transform="rotate(-35 12 12)"/></svg>
  <svg class="ml-[26px]" width="24" height="22"><path d="M2 2h9l2 3h9v16H2z" fill="#f6d878" stroke="#d8b050"/><rect x="7" y="13" width="10" height="8" fill="#3a9ad8"/></svg>
  <svg class="ml-[26px]" width="24" height="26" fill="none"><circle cx="12" cy="14" r="10" fill="#7cc840" stroke="#4a9a20"/><path d="M6 14h11c0-4-2-6-5-6s-6 2-6 6 3 6 6 6c2 0 3-1 4-2" stroke="#fff" stroke-width="2.500"/></svg>
  <div class="ml-[13px] w-[48px] h-full bg-[#394247] flex items-center justify-center">
    <svg width="24" height="24"><use href="#app"/></svg>
  </div>
  <svg class="ml-[14px]" width="24" height="26" fill="none" stroke="#1e9af0" stroke-width="5"><path d="M19 5c-9-3-14 3-12 9 2 6 10 8 13 2 1-3-1-6-5-5"/></svg>
  <div class="ml-[26px] w-[24px] h-[30px] rounded-[3px] bg-[#1488e8] flex items-center justify-center">
    <svg width="20" height="22" fill="none" stroke="#fff" stroke-width="1.800"><path d="M10 2v18M10 5c-7-1-7 9 0 7 7 2 7-8 0-7"/></svg>
  </div>
  <span class="absolute left-[1000px] top-[12px] text-[#d8d8d8]">链接</span>
  <svg class="absolute left-[1034px] top-[14px]" width="14" height="9" fill="none" stroke="#e8e8e8" stroke-width="1.200"><path d="M1 8l6-6 6 6"/></svg>
  <svg class="absolute left-[1081px] top-[12px]" width="18" height="14" fill="none" stroke="#f0f0f0"><rect x="4.500" y="3.500" width="11" height="9" fill="#888"/><path d="M1 2v4h3V2M2.500 6v3"/></svg>
  <svg class="absolute left-[1109px] top-[11px]" width="15" height="16" fill="none" stroke="#d0d0d0"><path d="M1 15C1 8 7 2 14 1M4 15c0-5 4-9 10-10M7 15c0-3 3-6 7-6"/><circle cx="12" cy="13" r="1.500" fill="#e8e8e8"/></svg>
  <svg class="absolute left-[1154px] top-[12px]" width="23" height="15" fill="none" stroke="#f0f0f0"><rect x=".5" y=".5" width="22" height="13"/><path d="M3 4h17M3 7h17M6 10.500h11" stroke-dasharray="1.500 1"/></svg>
  <span class="absolute left-[1187px] top-[12px] text-[13px]">中</span>
  <svg class="absolute left-[1214px] top-[9px]" width="15" height="20"><path d="M3 2l11-2 1 16-12 4-3-15z" fill="#ee4c23"/><path d="M11 5.500C7 4 4 6 5 8s6 1 6 4-4 3-6 2" fill="none" stroke="#fff" stroke-width="2"/></svg>
  <span class="absolute left-[1261px] top-[6px] text-[#e8e8e8]">11:49</span>
  <span class="absolute left-[1248px] top-[24px] text-[#e8e8e8]">2018/7/12</span>
  <svg class="absolute left-[1324px] top-[12px]" width="16" height="17" fill="none" stroke="#f0f0f0"><path d="M.5.500h15v11h-5l-2.500 3-2.500-3H.5z"/></svg>
  <div class="absolute left-[748px] bottom-0 w-[42px] h-[3px] bg-[#76b9ed]"></div>
  <div class="absolute left-[793px] bottom-0 w-[48px] h-[3px] bg-[#76b9ed]"></div>
  <div class="absolute left-[846px] bottom-0 w-[44px] h-[3px] bg-[#76b9ed]"></div>
  <div class="absolute left-[895px] bottom-0 w-[40px] h-[3px] bg-[#76b9ed]"></div>
</div>

<!-- sogou ime bar, floats over the title bar -->
<div class="absolute left-[997px] top-[3px] w-[178px] h-[23px] bg-white border border-[#b8cde0] flex items-center">
  <span class="ml-[5px] font-bold text-[13px] text-[#1a7ac8]">中</span>
  <span class="ml-[7px] font-bold text-[13px] text-[#1a7ac8]">°,</span>
  <svg class="ml-[9px]" width="16" height="16" fill="none" stroke="#1a7ac8" stroke-width="1.300"><circle cx="8" cy="8" r="7"/><path d="M4.500 9.500c1 3 6 3 7 0M6 5v2M10 5v2"/></svg>
  <svg class="ml-[7px]" width="12" height="17" fill="#1a7ac8"><rect x="3" y="0" width="6" height="11" rx="3"/><path d="M1 7c0 7 10 7 10 0M6 13v3M3 16h6" fill="none" stroke="#1a7ac8" stroke-width="1.500"/></svg>
  <svg class="ml-[7px]" width="16" height="13"><rect width="16" height="13" rx="1" fill="#1a7ac8"/><path d="M2 4h12M2 7h12M4 10h8" stroke="#fff" stroke-dasharray="2 1"/></svg>
  <svg class="ml-[7px]" width="15" height="16" fill="#b8c0c8"><circle cx="6" cy="4" r="3"/><path d="M1 14c0-7 10-7 10 0z"/></svg>
  <svg class="ml-[6px]" width="15" height="14" fill="#1a7ac8"><path d="M4 0L0 3l2 3 1.500-1v9h8V5L13 6l2-3-4-3H9.500a2 2 0 0 1-4 0z"/></svg>
  <svg class="ml-[5px]" width="14" height="15" fill="none" stroke="#1a7ac8" stroke-width="2.500"><path d="M1.500 13.500L8 6"/><path d="M7 5c0-3 3-4 5-3l-2 2 1 1 2-1c0 3-2 5-5 4" fill="#1a7ac8" stroke-width="1"/></svg>
</div>
<div class="absolute left-[975px] top-0 w-[40px] h-[5px] bg-[#46b860] rounded-b-[3px]"></div>
<svg class="absolute left-[970px] top-[7px]" width="28" height="28"><path d="M5 2l20-2 3 20-20 7-6-2z" fill="#ee4c23"/><path d="M20 8C13 4 7 8 9 12s11 2 11 7-8 5-12 2" fill="none" stroke="#fff" stroke-width="3.500"/></svg>

<!-- query dialog -->
<div class="absolute left-[210px] top-[91px] w-[851px] h-[512px] bg-white border border-[#4a90d9] shadow-[6px_6px_18px_rgba(0,0,0,0.3)] flex flex-col">
  <div class="h-[29px] shrink-0 flex items-center relative">
    <svg class="w-[15px] h-[15px] ml-[7px]"><use href="#app"/></svg>
    <span class="ml-[6px]">查询</span>
    <svg class="absolute left-[728px] top-[8px]" width="110" height="14" fill="none" stroke="#111"><path d="M0 7.500H12" stroke="#c8c8c8"/><rect x="49.500" y="2.500" width="9" height="9"/><path d="M95 2l11 11M106 2L95 13"/></svg>
  </div>
  <div class="h-[27px] shrink-0 bg-[#f0f0f0] flex items-start relative whitespace-nowrap">
    <span class="ml-[7px] mt-[5px]">清单指引</span>
    <div class="ml-[11px] w-[1px] h-[21px] bg-[#bbb]"></div>
    <span class="ml-[10px] mt-[5px]">清单</span>
    <div class="ml-[21px] w-[1px] h-[21px] bg-[#bbb]"></div>
    <div class="ml-[3px] mt-[1px] w-[40px] h-[22px] border-2 border-[#aaa] border-r-[#e8e8e8] border-b-[#e8e8e8] flex items-center justify-center">定额</div>
    <div class="ml-[5px] w-[1px] h-[21px] bg-[#bbb]"></div>
    <span class="ml-[7px] mt-[5px]">人材机</span>
    <div class="ml-[12px] w-[1px] h-[21px] bg-[#bbb]"></div>
    <span class="ml-[11px] mt-[5px]">补充人材机</span>
    <div class="ml-[11px] w-[1px] h-[21px] bg-[#bbb]"></div>
    <button class="ml-[394px] mt-[3px] w-[74px] h-[23px] bg-[#e1e1e1] border border-[#adadad]">插入(I)</button>
    <button class="ml-[3px] mt-[3px] w-[71px] h-[23px] bg-[#e1e1e1] border border-[#adadad]">替换(R)</button>
  </div>
  <div class="flex-1 min-h-0 flex border-t-2 border-[#c0c0c0]">
    <!-- left: chapter tree -->
    <div class="w-[219px] shrink-0 bg-[#f0f0f0] flex flex-col pl-[2px]">
      <div class="mt-[-1px] w-[213px] h-[20px] border border-[#bbb] bg-[#efefef] flex items-center overflow-hidden whitespace-nowrap">
        <span class="w-[196px] overflow-hidden">湖北省房屋建筑与装饰工程消耗量定额</span>
        <svg class="ml-[2px]" width="10" height="10"><use href="#down"/></svg>
      </div>
      <div class="mt-[2px] flex items-end">
        <div class="w-[60px] h-[21px] bg-white flex items-center justify-center">章节查询</div>
        <div class="w-[56px] h-[18px] border border-[#d8d8d8] flex items-center justify-center">条件查询</div>
      </div>
      <div class="w-[214px] flex-1 min-h-0 bg-white border-r border-[#ddd] pl-[2px] pt-[3px]">
        <div class="relative w-[209px] h-[368px] border-2 border-[#777] border-l border-r bg-white flex flex-col">
          <div class="flex flex-1 min-h-0">
            <div class="relative w-[188px] overflow-hidden whitespace-nowrap [&>div]:h-[16px] [&>div]:flex [&>div]:items-center [&_svg]:shrink-0 [&>div>span]:shrink-0">
              <div class="absolute left-[13px] top-[16px] bottom-0 w-0 border-l border-dotted border-[#888] !h-auto"></div>
              <div class="absolute left-[32px] top-[48px] w-0 border-l border-dotted border-[#888] !h-[222px]"></div>
              <div class="absolute left-[51px] top-[80px] w-0 border-l border-dotted border-[#888] !h-[168px]"></div>
              <div class="absolute left-[70px] top-[80px] w-0 border-l border-dotted border-[#888] !h-[120px]"></div>
              <div class="pl-[7px]"><svg width="10" height="10"><use href="#treeopen"/></svg><span class="ml-[6px]">建筑工程</span></div>
              <div class="pl-[26px]"><svg width="10" height="10"><use href="#treeclosed"/></svg><span class="ml-[6px]">第一章砌筑工程</span></div>
              <div class="pl-[26px]"><svg width="10" height="10"><use href="#treeopen"/></svg><span class="ml-[6px]">第二章混凝土及钢筋混凝土</span></div>
              <div class="pl-[45px]"><svg width="10" height="10"><use href="#treeclosed"/></svg><span class="ml-[6px]">一、现场搅拌混凝土</span></div>
              <div class="pl-[45px]"><svg width="10" height="10"><use href="#treeopen"/></svg><span class="ml-[6px]">二、商品混凝土</span></div>
              <div class="pl-[71px]"><span class="w-[8px] border-t border-dotted border-[#888]"></span><span class="ml-[1px]">1. 基础</span></div>
              <div class="pl-[71px]"><span class="w-[8px] border-t border-dotted border-[#888]"></span><span class="ml-[1px]">2. 柱</span></div>
              <div class="pl-[71px]"><span class="w-[8px] border-t border-dotted border-[#888]"></span><span class="ml-[1px]">3. 梁</span></div>
              <div class="pl-[71px]"><span class="w-[8px] border-t border-dotted border-[#888]"></span><span class="ml-[1px]">4. 墙</span></div>
              <div class="pl-[71px]"><span class="w-[8px] border-t border-dotted border-[#888]"></span><span class="ml-[1px]">5. 板</span></div>
              <div class="pl-[71px]"><span class="w-[8px] border-t border-dotted border-[#888]"></span><span class="ml-[1px]">6. 楼梯</span></div>
              <div class="pl-[71px]"><span class="w-[8px] border-t border-dotted border-[#888]"></span><span class="ml-[1px]">7. 其他构件</span></div>
              <div class="pl-[71px]"><span class="w-[8px] border-t border-dotted border-[#888]"></span><span class="ml-[-2px] pl-[3px] w-[80px] h-[16px] flex items-center bg-[#cce4fb]">8. 明沟、散水</span></div>
              <div class="pl-[45px]"><svg width="10" height="10"><use href="#treeclosed"/></svg><span class="ml-[6px]">三、集中搅拌混凝土</span></div>
              <div class="pl-[45px]"><svg width="10" height="10"><use href="#treeclosed"/></svg><span class="ml-[6px]">四、预制混凝土构件成品</span></div>
              <div class="pl-[51px]"><span class="w-[11px] border-t border-dotted border-[#888]"></span><span>五、混凝土构件接头灌缝</span></div>
              <div class="pl-[45px]"><svg width="10" height="10"><use href="#treeclosed"/></svg><span class="ml-[6px]">六、钢筋及铁件</span></div>
              <div class="pl-[26px]"><svg width="10" height="10"><use href="#treeclosed"/></svg><span class="ml-[6px]">第三章木结构工程</span></div>
              <div class="pl-[26px]"><svg width="10" height="10"><use href="#treeclosed"/></svg><span class="ml-[6px]">第四章金属结构工程</span></div>
              <div class="pl-[26px]"><svg width="10" height="10"><use href="#treeclosed"/></svg><span class="ml-[6px]">第五章屋面及防水工程</span></div>
              <div class="pl-[26px]"><svg width="10" height="10"><use href="#treeclosed"/></svg><span class="ml-[6px]">第六章保温、隔热、防腐工程</span></div>
              <div class="pl-[26px]"><svg width="10" height="10"><use href="#treeclosed"/></svg><span class="ml-[6px]">第七章混凝土、钢筋混凝土</span></div>
            </div>
            <div class="w-[16px] ml-[1px] bg-[#f0f0f0] flex flex-col items-center">
              <svg class="mt-[5px]" width="10" height="10"><use href="#up"/></svg>
              <div class="mt-[3px] w-[16px] h-[227px] bg-[#cdcdcd]"></div>
              <div class="flex-1"></div>
              <svg class="mb-[4px]" width="10" height="10"><use href="#down"/></svg>
            </div>
          </div>
          <div class="h-[16px] shrink-0 bg-[#f0f0f0] flex items-center">
            <svg class="ml-[4px]" width="10" height="10"><use href="#left"/></svg>
            <div class="ml-[4px] w-[105px] h-[16px] bg-[#cdcdcd]"></div>
            <svg class="ml-[53px]" width="10" height="10"><use href="#right"/></svg>
          </div>
        </div>
      </div>
      <div class="w-[214px] h-[38px] shrink-0 bg-[#f0f0f0] border-r border-[#ddd] flex items-center text-[#333] pb-[4px]">
        <div class="ml-[12px] w-[11px] h-[11px] rounded-full border border-[#aaa] bg-white"></div><span class="ml-[9px]">标准</span>
        <div class="ml-[20px] w-[11px] h-[11px] rounded-full border border-[#aaa] bg-white"></div><span class="ml-[9px]">补充</span>
        <div class="ml-[20px] w-[11px] h-[11px] rounded-full border border-[#aaa] bg-white flex items-center justify-center"><div class="w-[5px] h-[5px] rounded-full bg-black"></div></div><span class="ml-[9px]">全部</span>
      </div>
    </div>
    <!-- right: quota list -->
    <div class="flex-1 min-w-0 bg-white border-l border-[#c0c0c0] [&>div]:grid [&>div]:grid-cols-[22px_63px_268px_54px_66px_81px] [&>div]:w-[554px] [&>div>div]:border-r [&>div>div]:border-b [&>div>div]:border-[#c0c0c0] [&>div>div]:flex [&>div>div]:items-center [&>div>div]:overflow-hidden [&>div>div]:whitespace-nowrap">
      <div class="h-[20px] bg-[#f0f0f0] [&>div]:justify-center [&>div]:pt-[1px]">
        <div></div><div class="bg-gradient-to-b from-[#fbdc9f] to-[#f0b75e]">编码</div><div>名称</div><div>单位</div><div>含税单价</div><div>不含税单价</div>
      </div>
      <div class="h-[19px] [&>div]:pt-[2px]">
        <div class="bg-[#ffd28a] justify-center font-['Liberation_Mono'] text-[11px]">1</div>
        <div class="bg-[#d5e8f7] pl-[2px] font-['Liberation_Mono'] text-[12px] tracking-[-1.2px]">A2-122</div>
        <div class="pl-[2px]">混凝土明沟 商品混凝土</div>
        <div class="pl-[2px] font-['Liberation_Mono'] text-[12px] tracking-[-1.2px]">10m</div>
        <div class="justify-end pr-[3px] font-['Liberation_Mono'] text-[12px] tracking-[-1.2px]">449.99</div>
        <div class="justify-end pr-[3px] font-['Liberation_Mono'] text-[12px] tracking-[-1.2px]">413.55</div>
      </div>
      <div class="h-[19px] [&>div]:pt-[2px]">
        <div class="bg-[#f0f0f0] justify-center font-['Liberation_Mono'] text-[11px]">2</div>
        <div class="pl-[2px] font-['Liberation_Mono'] text-[12px] tracking-[-1.2px]">A2-123</div>
        <div class="pl-[2px]">混凝土散水面层一次抹光60mm 商品混凝土</div>
        <div class="pl-[2px] font-['Liberation_Mono'] text-[12px] tracking-[-1.2px]">100m2</div>
        <div class="justify-end pr-[3px] font-['Liberation_Mono'] text-[12px] tracking-[-1.2px]">3234.67</div>
        <div class="justify-end pr-[3px] font-['Liberation_Mono'] text-[12px] tracking-[-1.2px]">2905.12</div>
      </div>
    </div>
  </div>
</div>

<!-- red annotations drawn over the screenshot -->
<div class="absolute left-[392px] top-[93px] w-[420px] h-[170px] border-x-[8px] border-t-[6px] border-b-[8px] border-[#ff0000]"></div>
<div class="absolute left-[248px] top-[402px] w-[146px] h-[8px] bg-[#ff0000]"></div>

</body>
</html>
